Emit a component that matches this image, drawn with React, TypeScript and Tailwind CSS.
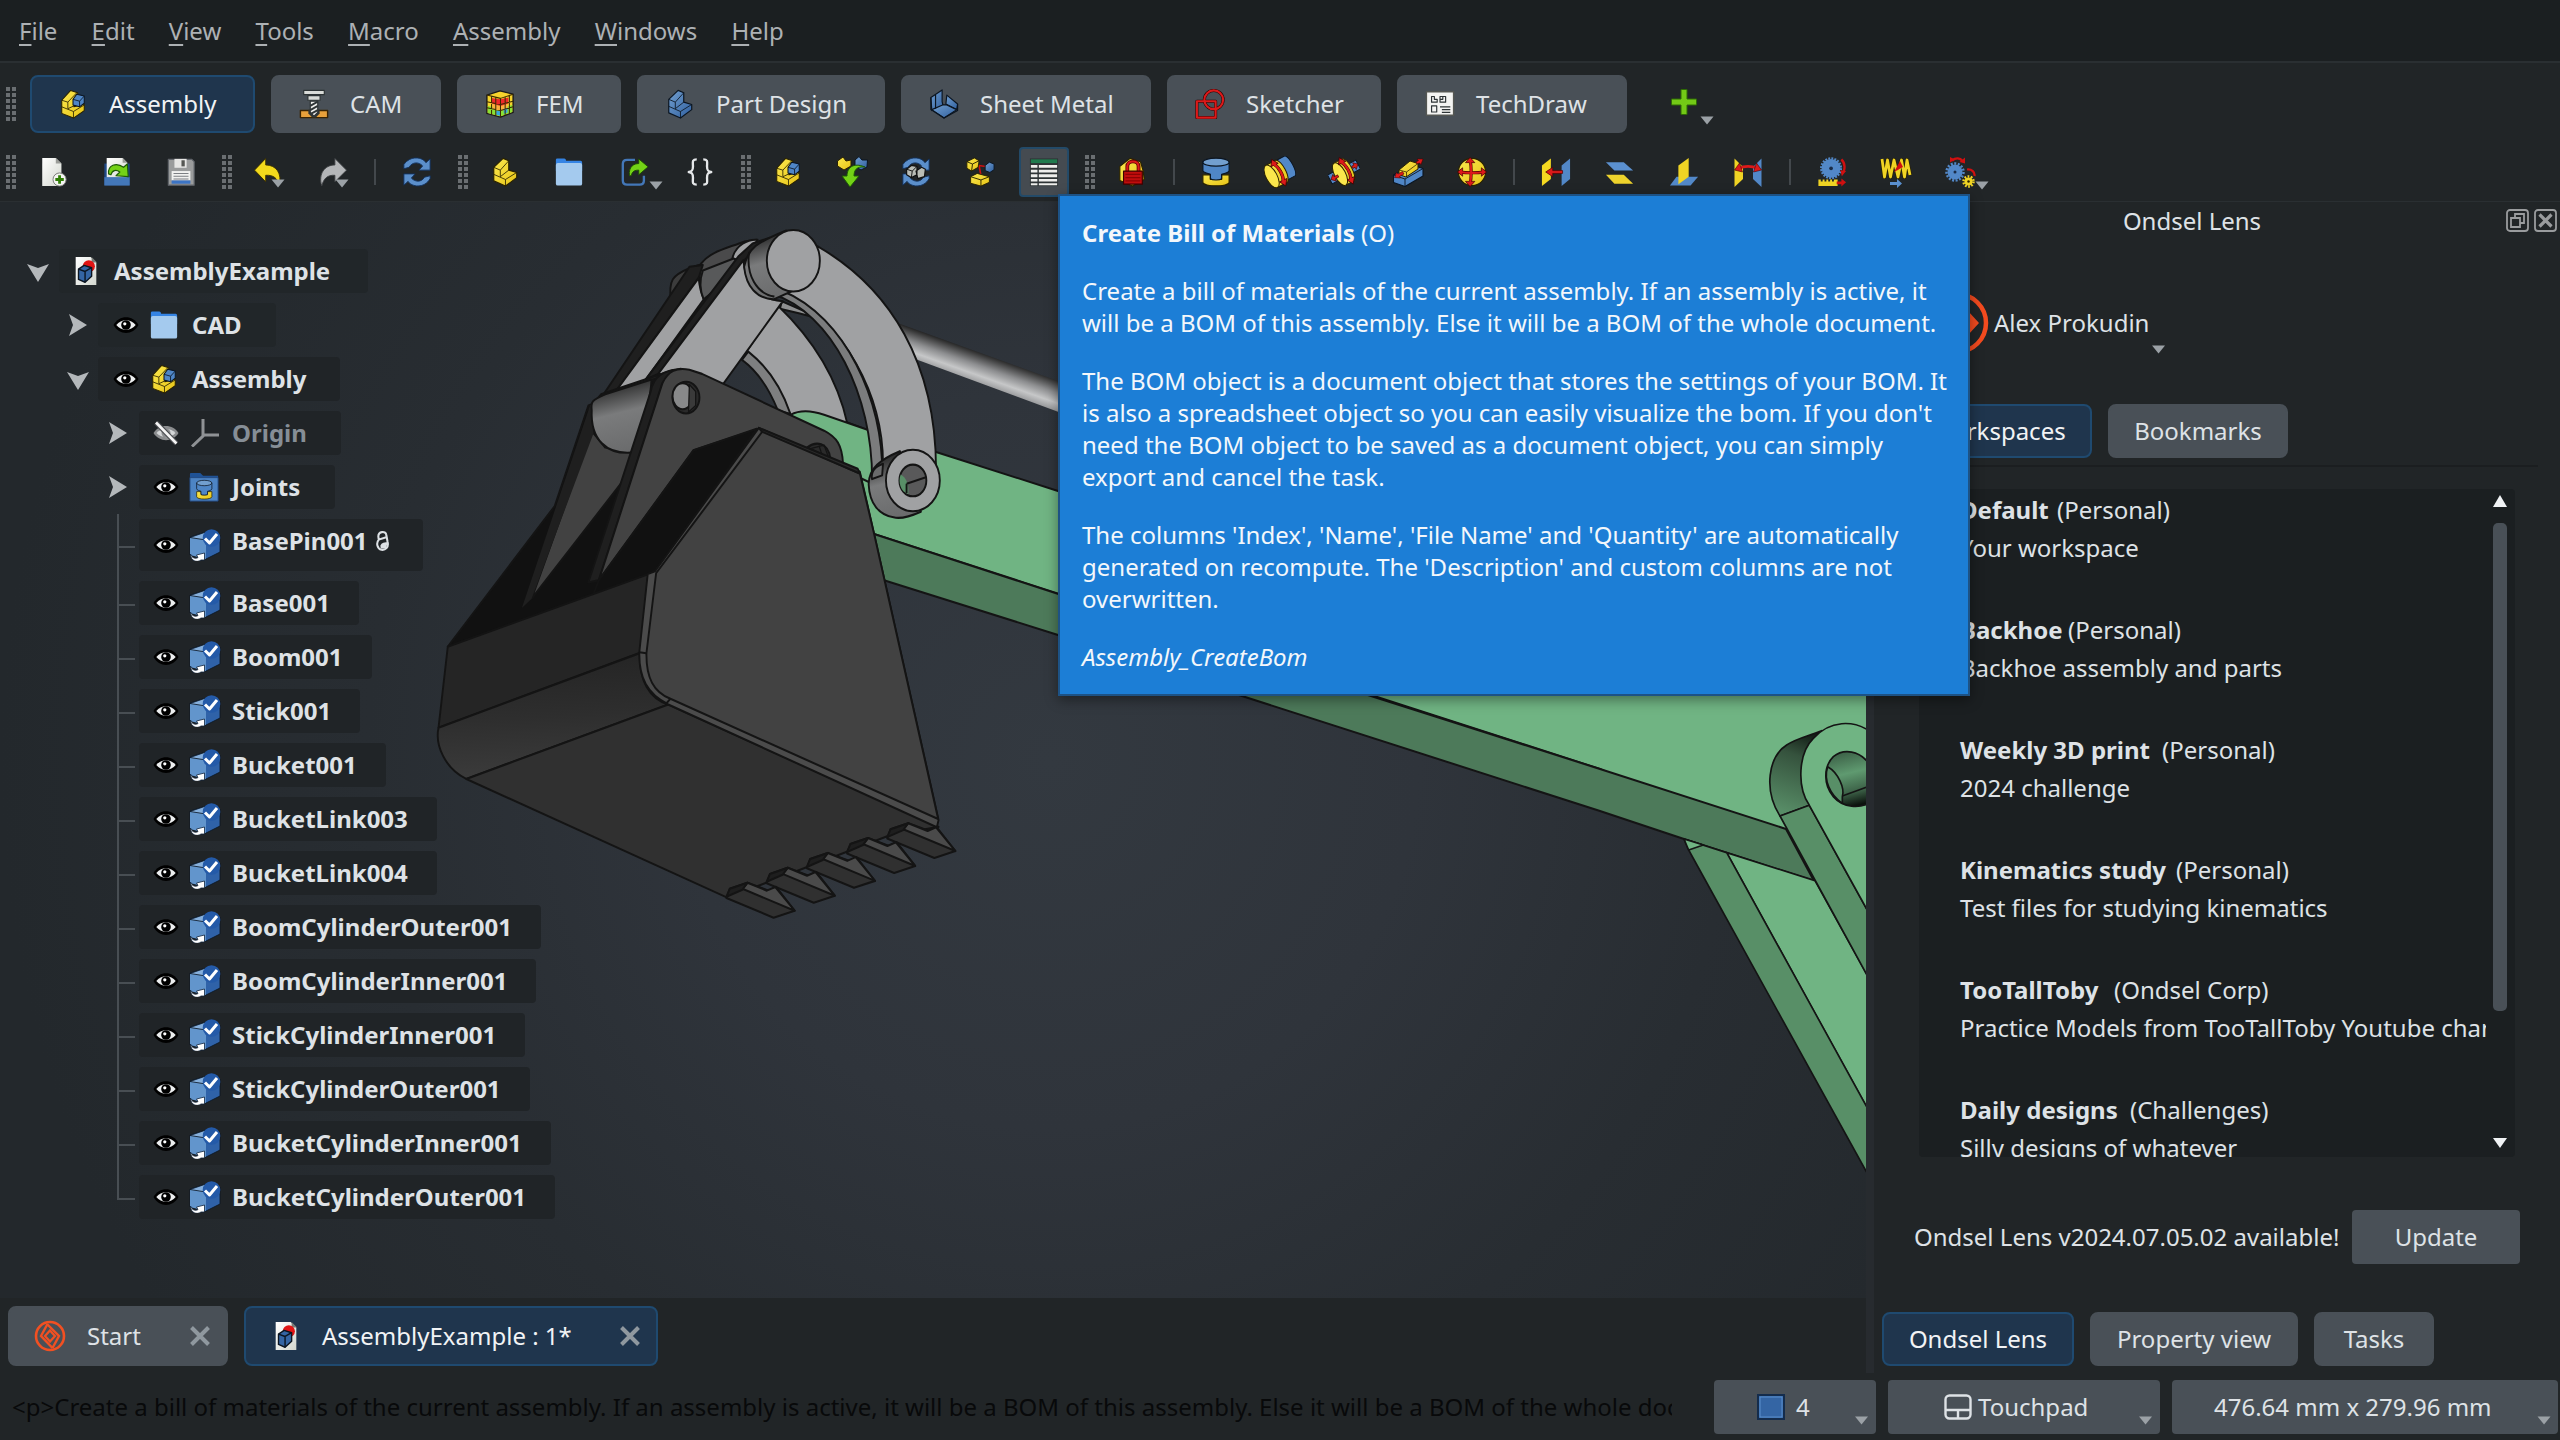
import React from "react";

type IconProps = { className?: string };
type P = { children: React.ReactNode; className?: string };

const K = "#0b1521";

function Svg({ children, className = "h-[30px] w-[30px]" }: P) {
  return (
    <svg viewBox="0 0 64 64" className={className + " shrink-0"} strokeLinejoin="round">
      <defs>
        <linearGradient id="yel" x1="0" y1="0" x2="1" y2="1">
          <stop offset="0" stopColor="#fce94f" />
          <stop offset="1" stopColor="#e6c315" />
        </linearGradient>
        <linearGradient id="blu" x1="0" y1="0" x2="1" y2="1">
          <stop offset="0" stopColor="#729fcf" />
          <stop offset="1" stopColor="#2f5f9f" />
        </linearGradient>
        <linearGradient id="page" x1="0" y1="0" x2="1" y2="1">
          <stop offset="0" stopColor="#ffffff" />
          <stop offset="1" stopColor="#d3d7cf" />
        </linearGradient>
      </defs>
      {children}
    </svg>
  );
}

function LShape({ fill, line }: { fill: string; line: string }) {
  return (
    <g fill={fill} stroke={line} strokeWidth="2.5">
      <path d="M8 22 L28 3 L40 8 L40 28 L57 33 L57 44 L33 62 L8 51 Z" />
      <path d="M8 22 L22 28 L40 8 M22 28 L22 42 L40 28 M8 37 L33 48 L57 33 M33 48 L33 62" fill="none" strokeWidth="1.8" />
    </g>
  );
}

const PartIcon = ({ className }: IconProps) => (
  <Svg className={className}>
    <LShape fill="url(#yel)" line="#2a2200" />
  </Svg>
);
const PartDesignIcon = () => (
  <Svg>
    <LShape fill="url(#blu)" line={K} />
  </Svg>
);

function AsmShape() {
  return (
    <g stroke="#2a2200" strokeWidth="2.2">
      <path d="M8 24 L27 3 L42 8 L42 14 L34 24 L34 38 L56 32 L56 46 L33 62 L8 52 Z" fill="url(#yel)" />
      <path d="M8 24 L21 28 L40 8 M21 28 L21 42 L34 36 M8 38 L33 48 L56 34 M33 48 L33 62" fill="none" strokeWidth="1.8" />
      <path d="M32 22 L40 11 L56 15 L56 30 L46 38 L32 34 Z" fill="#4f86c6" stroke={K} />
      <path d="M32 22 L46 26 L56 15 M46 26 L46 38" fill="none" stroke={K} strokeWidth="1.8" />
    </g>
  );
}
const AsmIcon = ({ className }: IconProps) => (
  <Svg className={className}>
    <AsmShape />
  </Svg>
);

const CamIcon = () => (
  <Svg>
    <path d="M3 46 H61 V61 H3 Z" fill="#e9a13b" stroke="#3b2403" strokeWidth="3" />
    <path d="M20 44 h24 v8 l-8 9 h-8 l-8 -9z" fill="#2e3436" />
    <path d="M10 3 H54 V12 H10 Z M19 14 H45 V24 H19 Z" fill="#d9dbd8" stroke="#2e3436" strokeWidth="2.5" />
    <path d="M24 26 H40 V50 L32 58 L24 50 Z" fill="#eeeeec" stroke="#2e3436" strokeWidth="2.5" />
    <path d="M24 36 L40 27 M24 45 L40 36 M25 53 L40 45" stroke="#2e3436" strokeWidth="4" />
  </Svg>
);

const FemIcon = () => (
  <Svg>
    <path d="M4 13 L32 4 L60 11 L60 50 L33 60 L4 52 Z" fill="#f6d32d" stroke="#1c1c1c" strokeWidth="3" />
    <path d="M6 36 L33 42 L58 34 L58 49 L33 58 L6 51 Z" fill="#8ae234" />
    <path d="M16 26 H48 V44 L33 46 L16 43Z" fill="#fcaf3e" />
    <path d="M14 19 L33 22 L50 18 V31 L33 36 L14 31Z" fill="#ef2929" />
    <path d="M24 46 L33 48 V57 L24 55 Z M40 42 L48 40 V50 L40 53Z" fill="#34a7e0" />
    <path d="M4 13 L33 20 L60 11 M33 20 V60 M14 16 V55 M23 18 V57 M43 17 V56 M52 14 V53 M4 27 L33 33 L60 26 M4 40 L33 46 L60 38" fill="none" stroke="#3d2b00" strokeWidth="2.2" />
  </Svg>
);

const SheetMetalIcon = () => (
  <Svg>
    <g fill="url(#blu)" stroke={K} strokeWidth="2.5">
      <path d="M4 18 L28 2 L28 27 L30 36 L6 46 Z" />
      <path d="M38 13 L61 32 L59 44 L36 32 Z" />
      <path d="M6 44 L29 34 L38 34 L59 44 L32 62 Z" />
      <path d="M61 32 V46 L32 62 L4 44 V18 M14 12 V42" fill="none" />
    </g>
  </Svg>
);

const SketcherIcon = () => (
  <Svg>
    <g fill="none" stroke="#280000" strokeWidth="6.5">
      <rect x="4" y="26" width="40" height="35" />
      <circle cx="40" cy="23" r="20" />
    </g>
    <g fill="none" stroke="#dc1a1a" strokeWidth="4.5">
      <rect x="4" y="26" width="40" height="35" />
      <circle cx="40" cy="23" r="20" />
    </g>
  </Svg>
);

const TechDrawIcon = () => (
  <Svg>
    <rect x="3" y="6" width="58" height="50" fill="#f4f4f2" stroke="#555753" strokeWidth="3" />
    <path d="M14 16 V28 H26 V22 H20 V16 Z M32 16 H44 V28 H32 Z M32 22 H38 V16 M14 36 H25 V49 H14 Z M32 38 H54 M36 44 H54 M36 50 H54" fill="none" stroke="#2e3436" strokeWidth="2.5" />
  </Svg>
);

const NewIcon = () => (
  <Svg>
    <path d="M9 2 H38 L50 14 V62 H9 Z" fill="url(#page)" />
    <path d="M38 2 L50 14 H38 Z" fill="#9a9c98" />
    <circle cx="46" cy="48" r="14" fill="#f4f4f2" stroke="#777a76" strokeWidth="2" />
    <path d="M46 39 V57 M37 48 H55" stroke="#2f7d05" strokeWidth="6" />
  </Svg>
);
const OpenIcon = () => (
  <Svg>
    <path d="M5 14 H59 V60 H5 Z" fill="#204a87" />
    <path d="M10 2 H44 L54 12 V44 H10 Z" fill="url(#page)" />
    <path d="M44 2 L54 12 H44 Z" fill="#9a9c98" />
    <path d="M5 43 H59 V61 H5 Z" fill="#4377b8" />
    <path d="M14 36 C12 18 30 10 46 22 L54 15 L56 42 L30 40 L38 32 C30 26 22 28 19 38 Z" fill="#73d216" stroke="#1d5a05" strokeWidth="2.5" />
  </Svg>
);
const SaveIcon = () => (
  <Svg>
    <path d="M5 5 H55 L60 10 V60 H5 Z" fill="#9a9c9c" stroke="#60646a" strokeWidth="2.5" />
    <rect x="18" y="4" width="26" height="19" fill="#e6e6e4" />
    <rect x="33" y="7" width="7" height="13" fill="#555753" />
    <path d="M12 30 H52 V50 H12 Z" fill="#f1f1ef" />
    <path d="M16 35 H48 M16 41 H48 M16 47 H48" stroke="#7c7f83" strokeWidth="2.2" />
    <rect x="12" y="50" width="40" height="7" fill="#3c74c4" />
  </Svg>
);
const Caret = ({ cls }: { cls: string }) => (
  <svg viewBox="0 0 14 9" className={cls} aria-hidden>
    <path d="M0.5 0.5 H13.5 L7 8.5 Z" fill="#9ba1a6" />
  </svg>
);
const UndoIcon = () => (
  <Svg>
    <path d="M25 3 V17 C48 17 60 36 54 60 C50 46 42 38 25 39 V53 L1 28 Z" fill="#f2d91c" stroke="#3a3000" strokeWidth="2" />
  </Svg>
);
const RedoIcon = () => (
  <Svg>
    <path d="M36 3 V17 C14 17 0 36 8 62 C12 46 20 38 36 39 V53 L61 28 Z" fill="#b4b6b8" stroke="#3c3f41" strokeWidth="2" />
  </Svg>
);
const Arrows = () => (
  <>
    <path d="M4 16 C18 -4 44 0 51 12 L60 4 V28 H36 L44 19 C36 10 22 10 15 22 L4 25 Z" fill="#5b8fcb" stroke="#12315c" strokeWidth="2" />
    <path d="M60 46 C48 68 20 64 13 52 L4 60 V36 H28 L20 45 C28 54 42 54 48 43 L60 40 Z" fill="#5b8fcb" stroke="#12315c" strokeWidth="2" />
  </>
);
const RefreshIcon = () => (
  <Svg>
    <Arrows />
  </Svg>
);
const FolderIcon = ({ className }: IconProps) => (
  <Svg className={className}>
    <path d="M4 6 Q4 3 7 3 H22 Q25 3 26 8 H57 Q60 8 60 12 V30 H4 Z" fill="#3584e4" />
    <rect x="4" y="13" width="56" height="48" rx="4" fill="#a4caee" />
  </Svg>
);
const LinkIcon = () => (
  <Svg>
    <path d="M32 6 H15 Q6 6 6 15 V50 Q6 59 15 59 H42 Q51 59 51 50 V40" fill="none" stroke="#4377b8" strokeWidth="5" />
    <path d="M20 40 C18 20 30 14 40 14 V4 L60 21 L40 38 V28 C32 28 26 30 24 40 Z" fill="#73d216" stroke="#1d4a05" strokeWidth="2" />
  </Svg>
);
const BracesIcon = () => (
  <Svg>
    <path d="M25 5 C14 5 17 12 17 20 C17 28 15 31 8 32 C15 33 17 36 17 44 C17 52 14 59 25 59 M39 5 C50 5 47 12 47 20 C47 28 49 31 56 32 C49 33 47 36 47 44 C47 52 50 59 39 59" fill="none" stroke="#e6e8ea" strokeWidth="5" />
  </Svg>
);
const InsertIcon = () => (
  <Svg className="h-[32px] w-[32px]">
    <path d="M3 10 L14 2 L20 10 L30 8 L30 20 L16 28 L3 20 Z" fill="url(#yel)" stroke="#2a2200" strokeWidth="2" />
    <path d="M38 8 L46 1 L52 8 L63 8 L62 22 L50 28 L38 20 Z" fill="url(#blu)" stroke={K} strokeWidth="2" />
    <path d="M58 22 C40 20 36 30 36 40 H46 L28 62 L12 40 H22 C22 24 34 12 58 22 Z" fill="#73d216" stroke="#1d5a05" strokeWidth="2" />
  </Svg>
);
const SolveIcon = () => (
  <Svg>
    <Arrows />
    <path d="M12 26 L22 18 L34 20 L34 38 L22 44 L12 38 Z M32 30 L44 22 L52 26 L50 42 L36 46 Z" fill="#babdb6" stroke="#111" strokeWidth="2.5" />
    <path d="M12 26 L24 30 L34 20 M24 30 L22 44" stroke="#111" strokeWidth="2" fill="none" />
  </Svg>
);
const ExplodeIcon = () => (
  <Svg>
    <path d="M30 18 L54 22 M30 18 L34 40" stroke="#cc1111" strokeWidth="3.5" />
    <path d="M4 10 L20 2 L30 8 L28 22 L14 30 L4 24 Z" fill="url(#yel)" stroke="#2a2200" strokeWidth="2" />
    <path d="M4 10 L16 15 L30 8 M16 15 L14 30" fill="none" stroke="#2a2200" strokeWidth="2" />
    <path d="M43 18 L52 11 L62 15 V27 L53 33 L43 29 Z" fill="url(#blu)" stroke={K} strokeWidth="2" />
    <path d="M12 42 L26 35 L52 42 V54 L34 62 L12 56 Z" fill="url(#yel)" stroke="#2a2200" strokeWidth="2" />
    <path d="M12 42 L34 49 L52 42 M34 49 V62" fill="none" stroke="#2a2200" strokeWidth="2" />
  </Svg>
);
const BomIcon = () => (
  <Svg>
    <rect x="2" y="3" width="60" height="59" fill="#2e3436" />
    <rect x="4" y="5" width="56" height="8" fill="#1f7a4d" />
    <path d="M4 17 H18 V23 H4Z M21 17 H60 V23 H21Z M4 27 H18 V33 H4Z M21 27 H60 V33 H21Z M4 37 H18 V43 H4Z M21 37 H60 V43 H21Z M4 47 H18 V52 H4Z M21 47 H60 V52 H21Z M4 56 H18 V60 H4Z M21 56 H60 V60 H21Z" fill="#eeeeec" />
  </Svg>
);
const LockIcon = () => (
  <Svg>
    <path d="M6 20 L28 3 L50 10 L56 30 L58 48 L33 62 L6 50 Z" fill="url(#yel)" stroke="#2a2200" strokeWidth="2.5" />
    <path d="M22 32 V20 C22 6 46 6 46 20 V32" fill="none" stroke="#5a0000" strokeWidth="8" />
    <path d="M22 32 V20 C22 6 46 6 46 20 V32" fill="none" stroke="#dc1a1a" strokeWidth="4.5" />
    <rect x="14" y="30" width="40" height="28" fill="#c00d0d" stroke="#3d0000" strokeWidth="2.5" />
    <path d="M18 37 H50 M18 44 H50 M18 51 H50" stroke="#8b0303" strokeWidth="2.5" />
  </Svg>
);
const Cyl = () => (
  <g strokeWidth="2.5">
    <path d="M4 38 H20 V48 H44 V38 H60 V54 C60 64 4 64 4 54 Z" fill="url(#yel)" stroke="#2a2200" />
    <path d="M4 11 V29 C4 34 18 36 20 37 V46 C24 50 40 50 44 46 V37 C48 36 60 34 60 29 V11 Z" fill="#4f86c6" stroke={K} />
    <ellipse cx="32" cy="11" rx="28" ry="8.5" fill="#729fcf" stroke={K} />
  </g>
);
const FixedIcon = () => (
  <Svg>
    <Cyl />
  </Svg>
);
const RevoluteIcon = () => (
  <Svg className="h-[32px] w-[32px]">
    <g transform="rotate(-28 32 32)">
      <path d="M38 8 H56 C63 16 63 46 56 53 H38 Z" fill="#5288c8" stroke={K} strokeWidth="2" />
      <path d="M14 7 H36 C46 16 46 48 36 57 H14 Z" fill="url(#yel)" stroke="#2a2200" strokeWidth="2" />
      <ellipse cx="13" cy="32" rx="11" ry="25" fill="#fbe74c" stroke="#2a2200" strokeWidth="2" />
      <path d="M28 11 C35 22 35 42 29 52" stroke="#3d0000" strokeWidth="6.5" fill="none" />
      <path d="M21 14 L29 2 L37 15 Z M22 49 L29 62 L38 50 Z" fill="#dc1a1a" stroke="#3d0000" strokeWidth="1.5" />
      <path d="M28 11 C35 22 35 42 29 52" stroke="#dc1a1a" strokeWidth="4.5" fill="none" />
    </g>
  </Svg>
);
const CylindricalIcon = () => (
  <Svg className="h-[32px] w-[32px]">
    <g transform="rotate(-28 32 32)">
      <path d="M0 22 H64 V42 H0 Z" fill="#5288c8" stroke={K} strokeWidth="2" />
      <path d="M24 7 H42 C52 16 52 48 42 57 H24 Z" fill="url(#yel)" stroke="#2a2200" strokeWidth="2" />
      <ellipse cx="23" cy="32" rx="11" ry="25" fill="#fbe74c" stroke="#2a2200" strokeWidth="2" />
      <path d="M36 11 C43 22 43 42 37 52" stroke="#3d0000" strokeWidth="6.5" fill="none" />
      <path d="M29 14 L37 2 L45 15 Z M30 49 L37 62 L46 50 Z" fill="#dc1a1a" stroke="#3d0000" strokeWidth="1.5" />
      <path d="M36 11 C43 22 43 42 37 52" stroke="#dc1a1a" strokeWidth="4.5" fill="none" />
      <path d="M2 33 L10 26 V31 H18 V36 H10 V41 Z M64 31 L56 24 V29 H51 V34 H56 V39 Z" fill="#dc1a1a" stroke="#4a0000" strokeWidth="1.2" />
    </g>
  </Svg>
);
const SliderIcon = () => (
  <Svg className="h-[32px] w-[32px]">
    <path d="M3 38 L40 18 L62 25 V40 L26 61 L3 53 Z" fill="#4f86c6" stroke={K} strokeWidth="2.2" />
    <path d="M3 38 L26 46 L62 25 M26 46 V61" fill="none" stroke={K} strokeWidth="1.8" />
    <path d="M14 28 L36 10 L52 15 V26 L28 42 L14 37 Z" fill="url(#yel)" stroke="#2a2200" strokeWidth="2" />
    <path d="M14 28 L29 32 L52 15 M29 32 V42" fill="none" stroke="#2a2200" strokeWidth="1.5" />
    <path d="M5 43 L9 33 L12 36 L21 31 L24 36 L15 41 L17 44 Z M62 6 L58 17 L55 14 L50 16 L48 12 L53 9 L50 6 Z" fill="#dc1a1a" stroke="#4a0000" strokeWidth="1.2" />
  </Svg>
);
const BallIcon = () => (
  <Svg>
    <circle cx="32" cy="32" r="29" fill="url(#yel)" stroke="#2a2200" strokeWidth="2.5" />
    <path d="M28 6 C31 20 31 44 28 58 M4 32 C20 34 44 34 60 32" stroke="#3d0000" strokeWidth="6.5" fill="none" />
    <path d="M28 1 L38 12 H18 Z M28 63 L38 52 H18 Z M1 32 L12 23 V41 Z M63 32 L52 23 V41 Z" fill="#dc1a1a" stroke="#3d0000" strokeWidth="1.5" />
    <path d="M28 8 C31 20 31 44 28 56 M6 32 C20 34 44 34 58 32" stroke="#dc1a1a" strokeWidth="4.5" fill="none" />
  </Svg>
);
const DistanceIcon = () => (
  <Svg>
    <path d="M2 18 L21 3 V47 L2 62 Z" fill="#f5d921" />
    <path d="M44 18 L62 3 V47 L44 62 Z" fill="#5288c8" />
    <path d="M10 32 L25 22 V29 H46 V35 H25 V42 Z" fill="#dc1a1a" stroke="#4a0000" strokeWidth="1.5" />
  </Svg>
);
const ParallelIcon = () => (
  <Svg>
    <path d="M2 11 H40 L60 29 H20 Z" fill="#5b90cf" />
    <path d="M2 38 H40 L60 57 H20 Z" fill="#eed32c" />
  </Svg>
);
const PerpendicularIcon = () => (
  <Svg>
    <path d="M16 42 H62 L46 61 H2 Z" fill="#5288c8" />
    <path d="M20 18 L42 2 V42 L20 58 Z" fill="#f0d424" />
  </Svg>
);
const AngleIcon = () => (
  <Svg className="h-[32px] w-[32px]">
    <path d="M5 5 L22 22 V46 L5 62 Z" fill="#f0d424" />
    <path d="M59 5 L42 22 V46 L59 62 Z" fill="#5288c8" />
    <path d="M14 25 C24 19 40 19 50 25" stroke="#dc1a1a" strokeWidth="5.5" fill="none" />
    <path d="M5 28 L15 14 L21 32 Z M59 28 L49 14 L43 32 Z" fill="#dc1a1a" stroke="#4a0000" strokeWidth="1.2" />
  </Svg>
);
const RackIcon = () => (
  <Svg>
    <circle cx="30" cy="24" r="20" fill="#5288c8" />
    <circle cx="30" cy="24" r="21" fill="none" stroke="#5288c8" strokeWidth="5" strokeDasharray="4 2.6" />
    <circle cx="30" cy="24" r="4" fill="#1a2c48" />
    <path d="M3 48 h5 v4 h4 v-4 h4 v4 h4 v-4 h4 v4 h4 v-4 h4 v4 h4 v-4 h8 V62 H3 Z" fill="#f0d424" />
    <path d="M52 5 C60 13 60 22 57 31" stroke="#d01010" strokeWidth="5" fill="none" />
    <path d="M50 28 L62 30 L53 41 Z M42 52 H52 V46 L62 54 L52 63 V58 H42 Z" fill="#d01010" />
  </Svg>
);
const ScrewIcon = () => (
  <Svg className="h-[32px] w-[32px]">
    <path d="M4 6 L9 42 L15 8 L21 42 L28 8 L36 42 L43 8 L49 42 L54 8 L60 38" fill="none" stroke="#2a2200" strokeWidth="8" />
    <path d="M4 6 L9 42 L15 8 L21 42 L28 8 L36 42 L43 8 L49 42 L54 8 L60 38" fill="none" stroke="#f0d424" strokeWidth="5.5" />
    <path d="M28 32 L40 10 L46 22 Z" fill="#d01010" />
    <path d="M20 52 H34 V46 L44 55 L34 64 V58 H20 Z" fill="#5b90cf" />
  </Svg>
);
const GearsIcon = () => (
  <Svg className="h-[32px] w-[32px]">
    <circle cx="22" cy="32" r="15" fill="#5288c8" />
    <circle cx="22" cy="32" r="17" fill="none" stroke="#5288c8" strokeWidth="5" strokeDasharray="4 3.1" />
    <circle cx="22" cy="32" r="3" fill="#1a2c48" />
    <circle cx="49" cy="51" r="8" fill="#f0d424" />
    <circle cx="49" cy="51" r="10" fill="none" stroke="#f0d424" strokeWidth="5" strokeDasharray="3.4 2.9" />
    <circle cx="49" cy="51" r="2.5" fill="#2a2200" />
    <path d="M16 9 C24 3 32 4 37 10" stroke="#d01010" strokeWidth="5" fill="none" />
    <path d="M12 13 V2 L22 7 Z M42 3 V15 L31 12 Z" fill="#d01010" />
    <path d="M46 27 C56 26 62 32 61 40" stroke="#d01010" strokeWidth="4.5" fill="none" />
  </Svg>
);

const DocIcon = ({ className = "h-[30px] w-[30px]" }: IconProps) => (
  <Svg className={className}>
    <path d="M10 2 H42 L54 14 V62 H10 Z" fill="url(#page)" />
    <path d="M44 2 L54 12 V14 H44 Z" fill="#777a76" />
    <circle cx="38" cy="22" r="13" fill="#e01414" />
    <path d="M16 28 L28 20 L44 25 V43 L30 56 L16 50 Z" fill="#3465a4" stroke={K} strokeWidth="3" />
    <path d="M16 28 L30 33 L44 25 M30 33 V56" fill="none" stroke={K} strokeWidth="3" />
  </Svg>
);

const EyeIcon = () => (
  <svg viewBox="0 0 26 18" className="-ml-[1px] mr-[1px] h-[18px] w-[26px] shrink-0">
    <path d="M0.5 9 C6 -1.5 20 -1.5 25.5 9 C20 19.5 6 19.5 0.5 9 Z" fill="#000" />
    <path d="M3.3 9 C8 2.6 18 2.6 22.7 9 C18 15.4 8 15.4 3.3 9 Z" fill="#eceeef" />
    <circle cx="13" cy="9" r="4.8" fill="#000" />
    <circle cx="11.8" cy="7.8" r="1.6" fill="#fff" />
  </svg>
);
const EyeOffIcon = () => (
  <svg viewBox="0 0 26 26" className="-ml-[1px] mr-[1px] h-[26px] w-[26px] shrink-0">
    <path d="M0.5 13 C6 3.5 20 3.5 25.5 13 C20 22.5 6 22.5 0.5 13 Z" fill="#8b8d8f" />
    <path d="M3.5 13 C8 7.5 18 7.5 22.5 13 C18 18.5 8 18.5 3.5 13 Z" fill="#d5d7d8" />
    <circle cx="13" cy="13" r="4.5" fill="#8b8d8f" />
    <path d="M3 2.5 L23.5 23.5" stroke="#4a4d50" strokeWidth="5" />
    <path d="M3 2.5 L23.5 23.5" stroke="#f5f5f5" strokeWidth="2.6" />
  </svg>
);
const OriginIcon = () => (
  <svg viewBox="0 0 28 28" className="h-[28px] w-[28px] shrink-0" fill="none" stroke="#8f9295" strokeWidth="3">
    <path d="M12 0 V17 L1 27.5 M12 16 H28" />
  </svg>
);
const JointsIcon = () => (
  <Svg>
    <path d="M2 4 Q2 2 4 2 H24 L30 8 H62 V20 H2 Z" fill="#1f5296" />
    <rect x="2" y="12" width="60" height="50" fill="#4d84c4" stroke="#22497f" strokeWidth="2" />
    <g transform="translate(14 16) scale(0.58 0.68)">
      <Cyl />
    </g>
  </Svg>
);
const LinkPartIcon = () => (
  <svg viewBox="0 0 32 32" className="h-8 w-8 shrink-0" strokeLinejoin="round">
    <path d="M1 8 L17 3 L31 6 V23 L17 30 L1 26 Z" fill="#2f62a8" stroke={K} strokeWidth="0.8" />
    <path d="M1 8.5 L17 11 V30 L1 26 Z" fill="#6295cc" />
    <path d="M1 8.5 L17 3 L28 6 L17 11 Z" fill="#86b0dd" stroke={K} strokeWidth="0.8" />
    <circle cx="22.5" cy="9" r="8.8" fill="#245aa8" />
    <path d="M16 9.5 L20.5 14 L28 5" fill="none" stroke="#fff" strokeWidth="3" />
    <path d="M1.5 25 C3 29.5 7 30 9 28.5 L7.5 26 L15.5 24 V31 L12 31 C8 34 1.5 32 1.5 25 Z" fill="#fff" stroke="#10243e" strokeWidth="0.8" />
  </svg>
);

const OndselIcon = () => (
  <svg viewBox="0 0 32 32" className="h-[32px] w-[32px] shrink-0" fill="none" stroke="#f25022" strokeWidth="2.6">
    <circle cx="16" cy="16" r="14" />
    <path d="M13 4 L25 16 L18.5 28 M13.5 4 L7 16 L18.5 28" strokeWidth="2.4" />
    <path d="M16 10.5 L21 16 L16 21.5 L11 16 Z" strokeWidth="2.2" />
  </svg>
);

const CloseIcon = () => (
  <svg viewBox="0 0 22 22" className="h-[22px] w-[22px] shrink-0">
    <path d="M2.5 2.5 L19.5 19.5 M19.5 2.5 L2.5 19.5" stroke="#8f989f" strokeWidth="4" />
  </svg>
);

const Grip = ({ className = "" }: IconProps) => (
  <div className={"flex shrink-0 justify-center " + className}>
    <svg viewBox="0 0 10 34" className="h-[34px] w-[10px]" fill="#6a6e71">
      {[0, 6, 12, 18, 24, 30].map((y) => (
        <g key={y}>
          <rect x="0" y={y} width="4" height="4" />
          <rect x="6" y={y} width="4" height="4" />
        </g>
      ))}
    </svg>
  </div>
);

const Slot = ({ children, className = "w-16" }: P) => (
  <div className={"relative flex shrink-0 items-center justify-center " + className}>{children}</div>
);
const Sep = () => (
  <div className="flex w-5 shrink-0 justify-center">
    <div className="h-[26px] w-[2px] bg-[#43484c]" />
  </div>
);

const menus = ["File", "Edit", "View", "Tools", "Macro", "Assembly", "Windows", "Help"];

const workbenches: { name: string; icon: React.ReactNode; w: string }[] = [
  { name: "Assembly", icon: <AsmIcon />, w: "w-[225px]" },
  { name: "CAM", icon: <CamIcon />, w: "w-[170px]" },
  { name: "FEM", icon: <FemIcon />, w: "w-[164px]" },
  { name: "Part Design", icon: <PartDesignIcon />, w: "w-[248px]" },
  { name: "Sheet Metal", icon: <SheetMetalIcon />, w: "w-[250px]" },
  { name: "Sketcher", icon: <SketcherIcon />, w: "w-[214px]" },
  { name: "TechDraw", icon: <TechDrawIcon />, w: "w-[230px]" },
];

const parts = [
  "Base001",
  "Boom001",
  "Stick001",
  "Bucket001",
  "BucketLink003",
  "BucketLink004",
  "BoomCylinderOuter001",
  "BoomCylinderInner001",
  "StickCylinderInner001",
  "StickCylinderOuter001",
  "BucketCylinderInner001",
  "BucketCylinderOuter001",
];

const workspaces = [
  { name: "Default", owner: "(Personal)", desc: "Your workspace", w: "w-[97px]" },
  { name: "Backhoe", owner: "(Personal)", desc: "Backhoe assembly and parts", w: "w-[108px]" },
  { name: "Weekly 3D print", owner: "(Personal)", desc: "2024 challenge", w: "w-[202px]" },
  { name: "Kinematics study", owner: "(Personal)", desc: "Test files for studying kinematics", w: "w-[216px]" },
  { name: "TooTallToby", owner: "(Ondsel Corp)", desc: "Practice Models from TooTallToby Youtube channel", w: "w-[154px]" },
  { name: "Daily designs", owner: "(Challenges)", desc: "Silly designs of whatever", w: "w-[170px]" },
];

function ArrowDown() {
  return (
    <svg viewBox="0 0 22 19" className="h-[19px] w-[22px]">
      <path d="M0 1 L11 5 L22 1 L11 19 Z" fill="#b4b8bb" />
    </svg>
  );
}
function ArrowRight() {
  return (
    <svg viewBox="0 0 19 22" className="h-[22px] w-[19px]">
      <path d="M1 0 L5 11 L1 22 L19 11 Z" fill="#b4b8bb" />
    </svg>
  );
}

function PartRow({ name, last, tall }: { name: string; last?: boolean; tall?: boolean }) {
  return (
    <div className={"flex " + (tall ? "h-[62px]" : "h-[54px]")}>
      <div className="flex w-[139px] shrink-0 flex-col pl-[117px]">
        <div className={"w-[18px] border-b-2 border-l-2 border-[#484e53] " + (tall ? "-mt-[5px] h-[34px]" : "h-[25px]")} />
        {!last && <div className="w-[2px] grow bg-[#484e53]" />}
      </div>
      <div className={"flex items-center rounded-[4px] bg-[#202427] pl-[15px] " + (tall ? "h-[52px] pr-[34px]" : "h-11 pr-[29px]")}>
        <EyeIcon />
        <div className="ml-[9px]">
          <LinkPartIcon />
        </div>
        <span className={"ml-[11px] " + (tall ? "-mt-[8px]" : "")}>{name}</span>
        {tall && (
          <svg viewBox="0 0 14 22" className="-mt-[9px] ml-[8px] h-[22px] w-[13px]" fill="none" stroke="#dee2e6" strokeWidth="2.2">
            <path d="M3 10 L2.5 6 C2.5 0.5 10.5 0 11 4 L12.5 12 C14 18 10 21 6 20.5 C1 19 0 13 3 9.5 L11 7" />
            <path d="M6 18 C5 15 7 14 11 13.5 L10 18 Z" fill="#dee2e6" />
          </svg>
        )}
      </div>
    </div>
  );
}

function ModelView() {
  return (
    <svg viewBox="0 202 1866 1096" className="absolute inset-0 h-full w-full" strokeLinejoin="round" stroke="#141414" strokeWidth="2">
      <defs>
        <radialGradient id="sky" gradientUnits="userSpaceOnUse" cx="1050" cy="760" r="1050">
          <stop offset="0" stopColor="#333940" />
          <stop offset="0.35" stopColor="#2f343b" />
          <stop offset="0.65" stopColor="#282d32" />
          <stop offset="1" stopColor="#23282c" />
        </radialGradient>
        <linearGradient id="rod" gradientUnits="userSpaceOnUse" x1="1300" y1="296" x2="1279" y2="362">
          <stop offset="0" stopColor="#262626" />
          <stop offset="0.4" stopColor="#8c8d8f" />
          <stop offset="0.7" stopColor="#c6c7c8" />
          <stop offset="1" stopColor="#8f9092" />
        </linearGradient>
        <linearGradient id="drum" x1="0.4" y1="0" x2="0.6" y2="1">
          <stop offset="0" stopColor="#1c1c1c" />
          <stop offset="0.45" stopColor="#7a7b7c" />
          <stop offset="1" stopColor="#6a6b6c" />
        </linearGradient>
        <linearGradient id="lug" x1="0.7" y1="0" x2="0.4" y2="1">
          <stop offset="0" stopColor="#0b120d" />
          <stop offset="0.35" stopColor="#35523d" />
          <stop offset="1" stopColor="#578c66" />
        </linearGradient>
        <linearGradient id="hole" x1="0.4" y1="0" x2="0.6" y2="1">
          <stop offset="0" stopColor="#3c6147" />
          <stop offset="0.4" stopColor="#5f9a70" />
          <stop offset="0.75" stopColor="#3c6147" />
          <stop offset="1" stopColor="#0b120d" />
        </linearGradient>
        <linearGradient id="curve" x1="0.45" y1="0" x2="0.55" y2="1">
          <stop offset="0" stopColor="#242424" />
          <stop offset="0.5" stopColor="#2e2e2e" />
          <stop offset="1" stopColor="#3c3c3c" />
        </linearGradient>
      </defs>
      <rect x="0" y="202" width="1866" height="1096" fill="url(#sky)" stroke="none" />

      {/* boom arm */}
      <path d="M786 420 C796 409 812 409 835 418 L870 431 L936 452 L1058 491 L1500 620 L1880 690 L1880 900 L1600 769 L874 534 L780 500 Z" fill="#70b483" />
      <path d="M700 480 L874 534 L1371 696 L1600 769 L1786 829 L1814 881 L1684 839 L1600 811 L1242 696 L1058 635 L880 579 Z" fill="#4d7a5a" />

      {/* rear bracket on the right */}
      <g transform="translate(1600 690) scale(0.33333)" strokeWidth="5">
        <path d="M380 488 L645 572 L810 870 L810 1270 Z" fill="#70b483" />
        <path d="M252 447 L380 488 L810 1268 L810 1465 L266 480 Z" fill="#588f67" />
        <path d="M252 447 L310 465 L266 480 Z" fill="#70b483" />
        <path d="M540 378 C490 300 505 200 560 165 C590 145 620 140 665 122 L720 180 L628 346 Z" fill="url(#lug)" />
        <path d="M540 378 L628 346 L810 675 L810 872 Z" fill="#588f67" />
        <path d="M810 675 L628 346 C590 290 595 190 640 145 C690 90 760 90 810 124 Z" fill="#70b483" />
        <path d="M810 225 C780 180 730 175 700 200 C670 230 670 285 700 320 C730 355 780 355 810 338 Z" fill="url(#hole)" />
        <path d="M683 230 C715 248 735 295 727 320 V340 C690 315 670 270 683 230 Z" fill="#588f67" />
        <path d="M727 318 L810 288" fill="none" />
      </g>

      {/* bucket assembly */}
      <g transform="translate(420 210) scale(0.42091 0.46556)">
        <g strokeWidth="4.5">
          <path d="M1120 238 L1530 372 L1530 438 L1170 318 Z" fill="url(#rod)" stroke="none" />
          {/* far curved link */}
          <path d="M860 196 L960 236 L900 222 L855 212 Z" fill="#8e8f90" />
          <path d="M850 205 C925 270 990 355 1015 458 L880 440 C850 370 815 330 765 318 Z" fill="#a0a1a3" />
          <path d="M780 304 C830 340 860 385 880 438 L850 430 C830 385 800 345 765 322 Z" fill="#7e7f80" />
          <path d="M880 440 C905 428 935 432 960 440 L1070 474 L1080 590 L1010 560 Z" fill="#70b483" />
          {/* upper dark pivots */}
          <path d="M596 195 C590 150 600 140 640 125 L690 110 L740 190 L600 230 Z" fill="#3c3c3c" />
          <path d="M668 115 C690 90 720 85 770 68 L800 64 L770 120 L680 195 C660 170 662 140 668 115 Z" fill="#4a4a4b" />
          <path d="M742 104 C750 75 780 62 802 64 L770 110 Z" fill="#a0a1a3" />
          {/* straight link pair */}
          <path d="M640 122 L672 118 L662 146 L468 386 L436 396 Z" fill="#1f1f1f" />
          <path d="M662 146 C664 165 668 180 674 192 L535 366 L468 386 Z" fill="#a0a1a3" />
          <path d="M672 130 L745 104 L770 120 L674 192 C664 170 664 150 672 130 Z" fill="#58595a" />
          <path d="M756 100 L790 72 L830 60 L770 108 L566 352 L536 364 Z" fill="#1f1f1f" />
          <path d="M768 108 C775 160 800 190 862 196 L720 374 L566 352 Z" fill="#a0a1a3" />
          {/* near curved link */}
          <path d="M945 78 C1120 170 1225 330 1226 555 L1100 545 C1100 400 1010 240 862 176 L848 168 Z" fill="#a0a1a3" />
          <path d="M835 180 C980 220 1075 400 1074 578 L1098 570 C1102 410 1010 230 862 174 L850 174 Z" fill="#7b7c7d" />
          <path d="M770 122 C780 80 800 70 870 44 L890 172 L840 192 C800 190 775 165 770 122 Z" fill="url(#drum)" />
          <path d="M782 90 C774 140 800 180 842 186" fill="none" />
          <ellipse cx="887" cy="109" rx="63" ry="66" fill="#a0a1a3" />
          <path d="M1066 590 C1065 555 1095 535 1140 518 L1190 648 C1160 660 1140 664 1125 660 C1090 655 1068 630 1066 590 Z" fill="url(#drum)" />
          <path d="M1074 578 L1098 570 L1100 545 C1085 550 1070 560 1074 578 Z" fill="#6a6b6c" />
          <ellipse cx="1171" cy="581" rx="64" ry="66" fill="#a0a1a3" />
          <ellipse cx="1171" cy="581" rx="32" ry="34" fill="#59595a" />
          <path d="M1142 568 C1156 575 1162 590 1160 610 C1142 605 1135 585 1142 568 Z" fill="#588f67" stroke="none" />
          <path d="M1156 588 L1202 574 M1156 588 V608" fill="none" />

          {/* bucket shell */}
          <path d="M66 938 L320 636 L400 420 L560 366 L800 470 L560 780 Z" fill="#111" />
          <path d="M398 430 L412 412 L560 362 L600 344 L430 396 Z" fill="#262626" />
          <path d="M265 835 L408 475 L440 510 L520 520 L488 575 Z" fill="#424242" />
          <path d="M242 855 L404 420 L416 410 L412 480 L265 835 Z" fill="#1f1f1f" stroke="none" />
          <path d="M408 430 C405 410 410 408 440 396 L550 364 C548 400 530 470 515 520 C440 530 405 490 408 430 Z" fill="url(#drum)" />
          <path d="M400 800 L548 390 C555 355 580 345 620 341 L576 372 L425 795 Z" fill="#1f1f1f" />
          <path d="M425 795 L576 372 C590 345 610 338 640 343 L670 352 L960 474 C990 488 1003 505 1005 545 L805 470 L650 516 Z" fill="#434343" />
          <path d="M425 795 L650 516 L800 470 L555 780 L410 830 Z" fill="#111" />
          <ellipse cx="632" cy="403" rx="32" ry="34" fill="#2a2a2a" />
          <ellipse cx="624" cy="400" rx="24" ry="28" fill="#88898a" />
          <path d="M640 375 L655 390 V420 L638 434 Z" fill="#3a3a3a" strokeWidth="3" />
          <path d="M920 510 C940 496 970 498 975 534 Z" fill="#2a2a2a" />
          <path d="M930 512 L960 505 L970 530 M948 506 L955 526" fill="none" strokeWidth="3" />

          {/* back plate, curve and bottom */}
          <path d="M66 938 L555 778 L542 785 L526 950 L44 1112 Z" fill="#252525" />
          <path d="M44 1112 L522 952 C520 1010 545 1050 590 1062 L110 1222 C60 1200 35 1150 44 1112 Z" fill="url(#curve)" />
          <path d="M110 1222 L590 1062 L1232 1325 L1110 1345 L730 1477 Z" fill="#303030" />
          {/* side plate */}
          <path d="M805 468 L1045 562 L1080 700 L1232 1310 L1228 1326 L590 1062 C540 1040 520 1005 521 950 L541 782 L558 776 Z" fill="#4b4b4b" />
          <path d="M815 474 L1045 566 L1080 700 L1231 1308 L595 1050 C555 1035 537 1005 538 952 L561 780 Z" fill="#424242" />
          <path d="M805 468 L1040 556 L1045 566 L812 476 Z" fill="#2a2a2a" />
          <path d="M521 950 L538 952 M585 1060 L595 1050" fill="none" />

          {/* teeth */}
          {[0, 1, 2, 3, 4].map((i) => (
            <g key={i} transform={`translate(${-95.5 * i} ${32 * i})`}>
              <path d="M1118 1330 L1160 1317 L1210 1334 L1228 1326 L1272 1377 L1222 1392 L1110 1350 Z" fill="#303030" />
              <path d="M1160 1317 L1206 1334 L1226 1326 L1272 1377 L1148 1330 Z" fill="#4a4a4a" />
              <path d="M1118 1330 L1160 1317 L1148 1332 L1110 1347 Z" fill="#1e1e1e" />
            </g>
          ))}
        </g>
      </g>
    </svg>
  );
}

function Tab({ active, className, children }: { active?: boolean; className: string; children: React.ReactNode }) {
  return (
    <div
      className={
        "flex shrink-0 items-center rounded-[8px] border-2 " +
        (active ? "border-[#1f4a70] bg-[#1f354d] text-[#f1f3f5] " : "border-[#495057] bg-[#495057] text-[#dee2e6] ") +
        className
      }
    >
      {children}
    </div>
  );
}

export default function App() {
  return (
    <div className="relative flex h-[1440px] w-[2560px] flex-col overflow-hidden whitespace-nowrap bg-[#212527] font-['Noto_Sans','Open_Sans',sans-serif] text-[24px] leading-[32px] text-[#dee2e6]">
      {/* menu bar */}
      <div className="flex h-[61px] shrink-0 gap-[34.2px] bg-[#1b1f21] pl-[19px] pt-[15px] text-[#adb1b4]">
        {menus.map((m) => (
          <span key={m}>
            <span className="underline decoration-2 underline-offset-[4px]">{m[0]}</span>
            {m.slice(1)}
          </span>
        ))}
      </div>
      <div className="h-[2px] shrink-0 bg-[#2a2f32]" />

      {/* workbench tabs */}
      <div className="flex h-[83px] shrink-0 items-center gap-4 pb-px">
        <Grip className="-mr-[8px] w-[22px]" />
        {workbenches.map((w, i) => (
          <Tab key={w.name} active={i === 0} className={"h-[58px] gap-[21px] pl-[26px] " + w.w}>
            {w.icon}
            <span>{w.name}</span>
          </Tab>
        ))}
        <div className="relative -mt-[4px] ml-[28px] h-[26px] w-[26px]">
          <svg viewBox="0 0 26 26" className="h-[26px] w-[26px]">
            <path d="M10 0.5 H16 V10 H25.5 V16 H16 V25.5 H10 V16 H0.5 V10 H10 Z" fill="#73c916" stroke="#2f6b05" />
          </svg>
          <Caret cls="absolute left-[29px] top-[27px] h-[9px] w-[14px]" />
        </div>
      </div>

      {/* tool bar */}
      <div className="flex h-[55px] shrink-0 items-center pb-[3px]">
        <Grip className="w-[21px] pl-[1px]" />
        <Slot><NewIcon /></Slot>
        <Slot><OpenIcon /></Slot>
        <Slot><SaveIcon /></Slot>
        <Grip className="w-6 pl-[3px]" />
        <Slot>
          <UndoIcon />
          <Caret cls="absolute left-[34px] top-[22px] h-[9px] w-[14px]" />
        </Slot>
        <Slot>
          <RedoIcon />
          <Caret cls="absolute left-[34px] top-[22px] h-[9px] w-[14px]" />
        </Slot>
        <Sep />
        <Slot><RefreshIcon /></Slot>
        <Grip className="w-6 pl-[3px]" />
        <Slot><PartIcon /></Slot>
        <Slot><FolderIcon /></Slot>
        <Slot className="w-[67px]">
          <LinkIcon />
          <Caret cls="absolute left-[48px] top-[24px] h-[9px] w-[14px]" />
        </Slot>
        <Slot><BracesIcon /></Slot>
        <Grip className="w-6 pl-[4px]" />
        <Slot><AsmIcon /></Slot>
        <Slot><InsertIcon /></Slot>
        <Slot><SolveIcon /></Slot>
        <Slot><ExplodeIcon /></Slot>
        <Slot>
          <div className="flex h-[50px] w-[50px] items-center justify-center rounded-[4px] border-2 border-[#234a68] bg-[#454b51]">
            <BomIcon />
          </div>
        </Slot>
        <Grip className="w-6 pl-[4px]" />
        <Slot><LockIcon /></Slot>
        <Sep />
        <Slot><FixedIcon /></Slot>
        <Slot><RevoluteIcon /></Slot>
        <Slot><CylindricalIcon /></Slot>
        <Slot><SliderIcon /></Slot>
        <Slot><BallIcon /></Slot>
        <Sep />
        <Slot><DistanceIcon /></Slot>
        <Slot><ParallelIcon /></Slot>
        <Slot><PerpendicularIcon /></Slot>
        <Slot><AngleIcon /></Slot>
        <Sep />
        <Slot><RackIcon /></Slot>
        <Slot><ScrewIcon /></Slot>
        <Slot>
          <GearsIcon />
          <Caret cls="absolute left-[47px] top-[25px] h-[9px] w-[14px]" />
        </Slot>
      </div>
      <div className="h-[1px] shrink-0 bg-[#2a2f32]" />

      {/* work area */}
      <div className="flex h-[1171px] shrink-0">
        <div className="flex w-[1866px] shrink-0 flex-col">
          <div className="relative h-[1096px] shrink-0 overflow-hidden">
            <ModelView />
            <div className="relative flex flex-col pt-[47px] font-bold">
              <div className="flex h-[54px]">
                <div className="w-[59px] shrink-0 pl-[27px] pt-[14px]"><ArrowDown /></div>
                <div className="flex h-11 items-center rounded-[4px] bg-[#212629] pl-[12px] pr-[38px]">
                  <DocIcon />
                  <span className="ml-[13px]">AssemblyExample</span>
                </div>
              </div>
              <div className="flex h-[54px]">
                <div className="w-[98px] shrink-0 pl-[68px] pt-[11px]"><ArrowRight /></div>
                <div className="flex h-11 items-center rounded-[4px] bg-[#212629] pl-[16px] pr-[34px]">
                  <EyeIcon />
                  <FolderIcon className="ml-[9px] h-[30px] w-[30px]" />
                  <span className="ml-[13px]">CAD</span>
                </div>
              </div>
              <div className="flex h-[54px]">
                <div className="w-[98px] shrink-0 pl-[67px] pt-[14px]"><ArrowDown /></div>
                <div className="flex h-11 items-center rounded-[4px] bg-[#202427] pl-[16px] pr-[34px]">
                  <EyeIcon />
                  <AsmIcon className="ml-[9px] h-[30px] w-[30px]" />
                  <span className="ml-[13px]">Assembly</span>
                </div>
              </div>
              <div className="flex h-[54px]">
                <div className="w-[139px] shrink-0 pl-[108px] pt-[11px]"><ArrowRight /></div>
                <div className="flex h-11 items-center rounded-[4px] bg-[#202427] pl-[15px] pr-[34px] text-[#868e96]">
                  <EyeOffIcon />
                  <div className="ml-[11px]"><OriginIcon /></div>
                  <span className="ml-[13px]">Origin</span>
                </div>
              </div>
              <div className="flex h-[54px]">
                <div className="w-[139px] shrink-0 pl-[108px] pt-[11px]"><ArrowRight /></div>
                <div className="flex h-11 items-center rounded-[4px] bg-[#202427] pl-[15px] pr-[35px]">
                  <EyeIcon />
                  <div className="ml-[9px]"><JointsIcon /></div>
                  <span className="ml-[13px]">Joints</span>
                </div>
              </div>
              <PartRow name="BasePin001" tall />
              {parts.map((p, i) => (
                <PartRow key={p} name={p} last={i === parts.length - 1} />
              ))}
            </div>
          </div>

          {/* document tabs */}
          <div className="flex gap-4 pl-2 pt-2">
            <Tab className="h-[60px] w-[220px] pl-[24px]">
              <OndselIcon />
              <span className="ml-[21px]">Start</span>
              <span className="ml-auto mr-[15px]"><CloseIcon /></span>
            </Tab>
            <Tab active className="h-[60px] w-[414px] pl-[25px]">
              <DocIcon />
              <span className="ml-[21px]">AssemblyExample : 1*</span>
              <span className="ml-auto mr-[15px]"><CloseIcon /></span>
            </Tab>
          </div>
        </div>
        <div className="w-2 shrink-0 bg-[#272b2f]" />

        {/* Ondsel Lens panel */}
        <div className="flex grow flex-col">
          <div className="relative flex h-[62px] shrink-0 justify-center pt-[3px]">
            <span className="pr-[50px]">Ondsel Lens</span>
            <svg viewBox="0 0 52 24" className="absolute right-[2px] top-[7px] h-6 w-[52px]" fill="none" stroke="#9a9c9e" strokeWidth="1.8">
              <rect x="1" y="1" width="21" height="21" rx="3" />
              <path d="M5 9 H14 V18 H5 Z M9 9 V5 H18 V14 H14" />
              <rect x="29" y="1" width="21" height="21" rx="3" />
              <path d="M33.5 5.5 L45.5 17.5 M45.5 5.5 L33.5 17.5" strokeWidth="3.2" />
            </svg>
          </div>
          <div className="flex h-[140px] shrink-0 items-center pl-[51px]">
            <svg viewBox="0 0 64 64" className="-mt-[22px] h-16 w-16">
              <circle cx="32" cy="32" r="29" fill="none" stroke="#f44b1f" strokeWidth="4.5" />
              <path d="M32 8 L54 32 L32 56 L10 32 Z" fill="#f44b1f" />
            </svg>
            <span className="-mt-[22px] ml-[5px]">Alex Prokudin</span>
            <Caret cls="ml-[1px] mt-[30px] h-[9px] w-[17px]" />
          </div>
          <div className="flex shrink-0 gap-4 pl-[30px]">
            <Tab active className="h-[54px] w-[188px] justify-center">Workspaces</Tab>
            <Tab className="h-[54px] w-[180px] justify-center">Bookmarks</Tab>
          </div>
          <div className="ml-[30px] mr-[22px] mt-[7px] h-[2px] shrink-0 bg-[#1b1e20]" />

          <div className="ml-[45px] mr-[45px] mt-[22px] flex h-[668px] shrink-0 overflow-hidden rounded-[4px] bg-[#1b1f21]">
            <div className="flex w-[567px] flex-col overflow-hidden pl-[41px] pt-[5px]">
              {workspaces.map((w) => (
                <div key={w.name} className="flex h-[120px] shrink-0 flex-col gap-[6px]">
                  <div className="flex">
                    <span className={"shrink-0 font-bold " + w.w}>{w.name}</span>
                    <span>{w.owner}</span>
                  </div>
                  <span>{w.desc}</span>
                </div>
              ))}
            </div>
            <div className="flex flex-col items-center pl-[7px] pt-[6px]">
              <svg viewBox="0 0 14 12" className="h-3 w-[14px]"><path d="M7 0 L14 12 H0 Z" fill="#f1f3f5" /></svg>
              <div className="mt-4 h-[488px] w-[14px] rounded-[5px] bg-[#495057]" />
              <svg viewBox="0 0 14 10" className="mt-[127px] h-[10px] w-[14px]"><path d="M0 0 H14 L7 10 Z" fill="#f1f3f5" /></svg>
            </div>
          </div>

          <div className="ml-[40px] mt-[53px] flex h-[54px] shrink-0 items-center">
            <span className="w-[438px]">Ondsel Lens v2024.07.05.02 available!</span>
            <div className="flex h-[54px] w-[168px] items-center justify-center rounded-[4px] bg-[#495057]">Update</div>
          </div>

          <div className="ml-2 mt-[48px] flex shrink-0 gap-4">
            <Tab active className="h-[54px] w-[192px] justify-center">Ondsel Lens</Tab>
            <Tab className="h-[54px] w-[208px] justify-center">Property view</Tab>
            <Tab className="h-[54px] w-[120px] justify-center">Tasks</Tab>
          </div>
        </div>
      </div>

      {/* status bar */}
      <div className="flex h-[67px] shrink-0 items-center">
        <div className="mr-[42px] w-[1672px] shrink-0 overflow-hidden pl-[12px] text-[#08090a]">
          &lt;p&gt;Create a bill of materials of the current assembly. If an assembly is active, it will be a BOM of this assembly. Else it will be a BOM of the whole document.
        </div>
        <div className="relative flex h-[54px] w-[162px] items-center rounded-[4px] bg-[#495057] pl-[43px]">
          <svg viewBox="0 0 28 26" className="h-[26px] w-7">
            <rect x="1" y="1" width="26" height="24" fill="#3465a4" stroke="#142c4c" strokeWidth="2" />
            <rect x="3" y="3" width="22" height="20" fill="none" stroke="#5b8fcb" />
          </svg>
          <span className="ml-[11px]">4</span>
          <Caret cls="absolute right-[7px] top-[36px] h-[9px] w-[15px]" />
        </div>
        <div className="relative ml-3 flex h-[54px] w-[272px] items-center rounded-[4px] bg-[#495057] pl-[56px]">
          <svg viewBox="0 0 28 26" className="h-[26px] w-7" fill="none" stroke="#dee2e6" strokeWidth="2.4">
            <rect x="1.5" y="1.5" width="25" height="23" rx="4" />
            <path d="M1.5 16 H26.5 M14 16 V24.5" />
          </svg>
          <span className="ml-[6px]">Touchpad</span>
          <Caret cls="absolute right-[7px] top-[36px] h-[9px] w-[15px]" />
        </div>
        <div className="relative ml-3 flex h-[54px] w-[386px] items-center rounded-[4px] bg-[#495057] pl-[42px]">
          476.64 mm x 279.96 mm
          <Caret cls="absolute right-[6px] top-[36px] h-[9px] w-[16px]" />
        </div>
      </div>

      {/* tooltip */}
      <div className="absolute left-[1058px] top-[194px] flex h-[502px] w-[912px] flex-col gap-[26px] border-2 border-[#1d5285] bg-[#1c7ed6] pl-[22px] pt-[21px] text-[#f3f7fb] shadow-[0_4px_12px_rgba(0,0,0,0.4)]">
        <p><b>Create Bill of Materials</b> (O)</p>
        <p>
          Create a bill of materials of the current assembly. If an assembly is active, it<br />
          will be a BOM of this assembly. Else it will be a BOM of the whole document.
        </p>
        <p>
          The BOM object is a document object that stores the settings of your BOM. It<br />
          is also a spreadsheet object so you can easily visualize the bom. If you don't<br />
          need the BOM object to be saved as a document object, you can simply<br />
          export and cancel the task.
        </p>
        <p>
          The columns 'Index', 'Name', 'File Name' and 'Quantity' are automatically<br />
          generated on recompute. The 'Description' and custom columns are not<br />
          overwritten.
        </p>
        <p className="italic">Assembly_CreateBom</p>
      </div>
    </div>
  );
}
